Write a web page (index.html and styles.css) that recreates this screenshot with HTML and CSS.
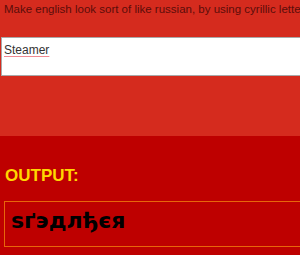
FILE: index.html
```html
<!DOCTYPE html>
<html lang="en">
<head>
    <meta charset="UTF-8">
    <meta name="viewport" content="width=device-width, initial-scale=1.0">
    <title>Cyrillic English</title>
    <link rel="stylesheet" href="styles.css">
</head>
<body>
    <section class="input-area">
        <p class="intro">Make english look sort of like russian, by using cyrillic letters</p>
        <textarea class="input-text" spellcheck="true">Steamer</textarea>
    </section>

    <section class="output-area">
        <h2 class="output-title">OUTPUT:</h2>
        <div class="output-box">ѕґэдлђєя</div>
    </section>
</body>
</html>
```

FILE: styles.css
```css
body {
    margin: 0;
    font-family: "Liberation Sans", Arial, sans-serif;
    overflow: hidden;
}

.input-area {
    background-color: #d52b1e;
    height: 136px;
    padding: 1px 0 0 0;
    box-sizing: border-box;
}

.intro {
    margin: 2px 0 0 4px;
    font-size: 11.5px;
    color: #5b0d0a;
    white-space: nowrap;
}

.input-text {
    display: block;
    margin: 22px 0 0 1px;
    width: 320px;
    height: 39px;
    box-sizing: border-box;
    padding: 5px 2px 3px;
    border: 1px solid #a9a9a9;
    border-radius: 0;
    font-family: "Liberation Sans", Arial, sans-serif;
    font-size: 12px;
    color: #333;
    resize: none;
    text-decoration: underline #f08a92;
    text-decoration-thickness: 1px;
    text-underline-offset: 2px;
}

.output-area {
    background-color: #be0000;
    height: 119px;
    padding: 30px 0 0 4px;
    box-sizing: border-box;
}

.output-title {
    margin: 0 0 0 1px;
    font-size: 17px;
    font-weight: bold;
    color: #ffd700;
}

.output-box {
    margin-top: 15px;
    width: 320px;
    height: 46px;
    box-sizing: border-box;
    border: 1px solid #e8650a;
    padding: 5px 6px;
    font-family: "DejaVu Sans", sans-serif;
    font-size: 22px;
    font-weight: bold;
    color: #000;
    line-height: 28px;
}
```
